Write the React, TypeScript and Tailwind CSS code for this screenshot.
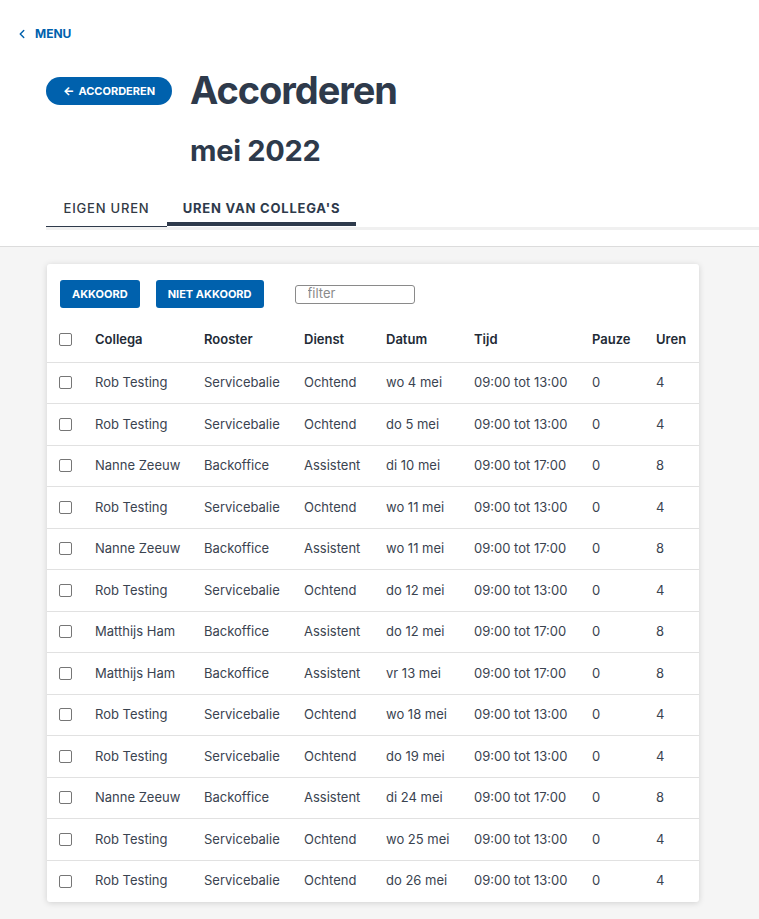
import { ChevronLeft } from "lucide-react";

type Row = {
    collega: string;
    rooster: string;
    dienst: string;
    datum: string;
    tijd: string;
    pauze: string;
    uren: string;
};

const ochtend = (naam: string, datum: string): Row => ({
    collega: naam,
    rooster: "Servicebalie",
    dienst: "Ochtend",
    datum,
    tijd: "09:00 tot 13:00",
    pauze: "0",
    uren: "4",
});

const assistent = (naam: string, datum: string): Row => ({
    collega: naam,
    rooster: "Backoffice",
    dienst: "Assistent",
    datum,
    tijd: "09:00 tot 17:00",
    pauze: "0",
    uren: "8",
});

const rows: Row[] = [
    ochtend("Rob Testing", "wo 4 mei"),
    ochtend("Rob Testing", "do 5 mei"),
    assistent("Nanne Zeeuw", "di 10 mei"),
    ochtend("Rob Testing", "wo 11 mei"),
    assistent("Nanne Zeeuw", "wo 11 mei"),
    ochtend("Rob Testing", "do 12 mei"),
    assistent("Matthijs Ham", "do 12 mei"),
    assistent("Matthijs Ham", "vr 13 mei"),
    ochtend("Rob Testing", "wo 18 mei"),
    ochtend("Rob Testing", "do 19 mei"),
    assistent("Nanne Zeeuw", "di 24 mei"),
    ochtend("Rob Testing", "wo 25 mei"),
    ochtend("Rob Testing", "do 26 mei"),
];

function Box() {
    return (
        <span className="block w-[13px] h-[13px] border border-[#767676] rounded-[2px] bg-white" />
    );
}

export default function App() {
    return (
        <div
            className="min-h-screen bg-white text-[#2e3a4b]"
            style={{ fontFamily: "Inter, 'Noto Sans', sans-serif" }}
        >
            <div className="bg-white">
                <div className="pt-[26px] pl-[15px]">
                    <a className="flex items-center gap-[6px] text-[#0061ad] text-[12px] font-bold leading-4">
                        <ChevronLeft size={14} strokeWidth={2.5} />
                        MENU
                    </a>
                </div>
                <div className="flex items-start pl-[46px] pt-[26px]">
                    <button className="mt-[9px] h-[28px] w-[126px] rounded-full bg-[#0061ad] text-white text-[11px] font-bold flex items-center justify-center gap-[4px]">
                        <span className="text-[12px] leading-none">←</span>
                        ACCORDEREN
                    </button>
                    <div className="ml-[18px]">
                        <h1 className="text-[38px] font-bold tracking-[-0.028em] leading-[44px]">
                            Accorderen
                        </h1>
                        <h2 className="mt-[22px] text-[29px] font-bold tracking-[-0.01em] leading-[34px]">
                            mei 2022
                        </h2>
                    </div>
                </div>
                <div className="mt-[28px] ml-[46px] border-b-[3px] border-[#f0f0f0] flex">
                    <div className="w-[121px] h-[31px] pt-[3px] text-center text-[13px] font-medium tracking-[0.06em] text-[#333a45] border-b border-[#2e3a4b] mb-[-1px]">
                        EIGEN UREN
                    </div>
                    <div className="w-[189px] h-[30px] pt-[3px] mb-[1px] text-center text-[13px] font-bold tracking-[0.06em] text-[#2e3a4b] border-b-[4px] border-[#2e3a4b]">
                        UREN VAN COLLEGA'S
                    </div>
                </div>
                <div className="h-[16px]" />
            </div>
            <div className="border-t border-[#dcdcdc] bg-[#f5f5f5] pt-[17px] pb-[17px] pl-[47px] pr-[60px]">
                <div className="bg-white rounded-[3px] shadow-[0_1px_6px_rgba(0,0,0,0.15)]">
                    <div className="flex items-center pt-[16px] pb-[8px] px-[13px]">
                        <button className="h-[28px] px-[12px] rounded-[3px] bg-[#0061ad] text-white text-[11px] font-bold">
                            AKKOORD
                        </button>
                        <button className="ml-[16px] h-[28px] px-[12px] rounded-[3px] bg-[#0061ad] text-white text-[11px] font-bold">
                            NIET AKKOORD
                        </button>
                        <input
                            placeholder="filter"
                            className="ml-[31px] h-[19px] w-[120px] border border-[#8a8a8a] rounded-[3px] px-[12px] text-[13px] placeholder:text-[#8a8a8a] outline-none"
                        />
                    </div>
                    <table className="w-full border-collapse text-[13px] table-fixed">
                        <colgroup>
                            <col className="w-[48px]" />
                            <col className="w-[109px]" />
                            <col className="w-[100px]" />
                            <col className="w-[82px]" />
                            <col className="w-[88px]" />
                            <col className="w-[118px]" />
                            <col className="w-[64px]" />
                            <col />
                        </colgroup>
                        <thead>
                            <tr className="h-[46px] border-b border-[#e1e1e1] text-[#222a35]">
                                <th className="pl-[12px] pt-[1px] text-left">
                                    <Box />
                                </th>
                                <th className="pt-[1px] text-left font-semibold">Collega</th>
                                <th className="pt-[1px] text-left font-semibold">Rooster</th>
                                <th className="pt-[1px] text-left font-semibold">Dienst</th>
                                <th className="pt-[1px] text-left font-semibold">Datum</th>
                                <th className="pt-[1px] text-left font-semibold">Tijd</th>
                                <th className="pt-[1px] text-left font-semibold">Pauze</th>
                                <th className="pt-[1px] text-left font-semibold">Uren</th>
                            </tr>
                        </thead>
                        <tbody className="text-[#3a4350]">
                            {rows.map((r, idx) => (
                                <tr
                                    key={idx}
                                    className={`h-[41.5px] ${idx < rows.length - 1 ? "border-b border-[#e1e1e1]" : ""}`}
                                >
                                    <td className="pl-[12px]">
                                        <Box />
                                    </td>
                                    <td>{r.collega}</td>
                                    <td>{r.rooster}</td>
                                    <td>{r.dienst}</td>
                                    <td>{r.datum}</td>
                                    <td>{r.tijd}</td>
                                    <td>{r.pauze}</td>
                                    <td>{r.uren}</td>
                                </tr>
                            ))}
                        </tbody>
                    </table>
                </div>
            </div>
        </div>
    );
}
